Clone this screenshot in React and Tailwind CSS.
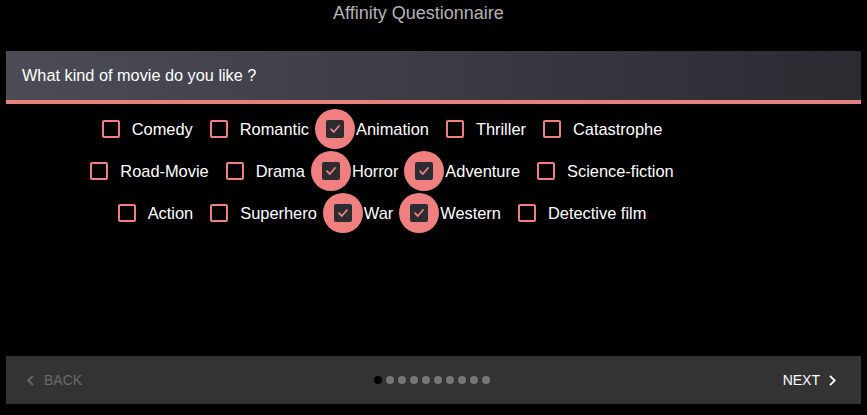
import React from "react";

const rows = [
  [["Comedy", false], ["Romantic", false], ["Animation", true], ["Thriller", false], ["Catastrophe", false]],
  [["Road-Movie", false], ["Drama", false], ["Horror", true], ["Adventure", true], ["Science-fiction", false]],
  [["Action", false], ["Superhero", false], ["War", true], ["Western", true], ["Detective film", false]],
];

function Item({ label, checked }) {
  return (
    <div className="flex items-center ml-[-11px] mr-[16px]">
      <span className="relative w-[42px] h-[42px] flex items-center justify-center shrink-0">
        {checked && <span className="absolute inset-[1px] rounded-full bg-[#f08080]" />}
        {checked ? (
          <span className="relative w-[18px] h-[18px] rounded-[2px] bg-[#2b2b31] flex items-center justify-center">
            <svg width="18" height="18" viewBox="0 0 18 18">
              <path d="M5 9.2 L7.8 12 L13 6" fill="none" stroke="#f08080" strokeWidth="1.8" strokeLinecap="round" strokeLinejoin="round" />
            </svg>
          </span>
        ) : (
          <span className="relative w-[18px] h-[18px] rounded-[2px] border-2 border-[#f08080]" />
        )}
      </span>
      <span className="text-white text-[16.4px] leading-none whitespace-nowrap">{label}</span>
    </div>
  );
}

export default function App() {
  return (
    <div className="w-[867px] h-[415px] bg-black flex flex-col font-['Liberation_Sans',Arial,sans-serif] overflow-hidden">
      <div className="h-[27px] pr-[30px] flex items-center justify-center text-[18px] text-[#b3b3b3]">
        Affinity Questionnaire
      </div>
      <div className="mt-[24px] mx-[6px] h-[53px] border-b-[4px] border-[#e98080] bg-gradient-to-r from-[#4b4c56] to-[#2b2c32] shadow-[0_3px_5px_rgba(0,0,0,0.9)] flex items-center pl-[16px] text-white text-[16.3px]">
        What kind of movie do you like ?
      </div>
      <div className="mt-[4px] pr-[88px] flex flex-col">
        {rows.map((r, i) => (
          <div key={i} className="h-[42px] flex items-center justify-center">
            {r.map(([l, c]) => (
              <Item key={l} label={l} checked={c} />
            ))}
          </div>
        ))}
      </div>
      <div className="mt-auto mb-[11px] mx-[6px] h-[48px] bg-[#333333] flex items-center justify-between pl-[21px] pr-[25px]">
        <div className="flex items-center gap-[10px] text-[#6b6b6b] text-[14px] w-[120px]">
          <svg width="7" height="11" viewBox="0 0 7 11">
            <path d="M6 0.8 L1.3 5.5 L6 10.2" fill="none" stroke="#6b6b6b" strokeWidth="1.8" />
          </svg>
          <span>BACK</span>
        </div>
        <div className="flex items-center gap-[4px]">
          {Array.from({ length: 10 }).map((_, i) => (
            <span key={i} className={`w-[8px] h-[8px] rounded-full ${i === 0 ? "bg-black" : "bg-[#777777]"}`} />
          ))}
        </div>
        <div className="flex items-center justify-end gap-[9px] text-white text-[14px] w-[120px]">
          <span>NEXT</span>
          <svg width="7" height="11" viewBox="0 0 7 11">
            <path d="M1 0.8 L5.7 5.5 L1 10.2" fill="none" stroke="#ffffff" strokeWidth="1.8" />
          </svg>
        </div>
      </div>
    </div>
  );
}
